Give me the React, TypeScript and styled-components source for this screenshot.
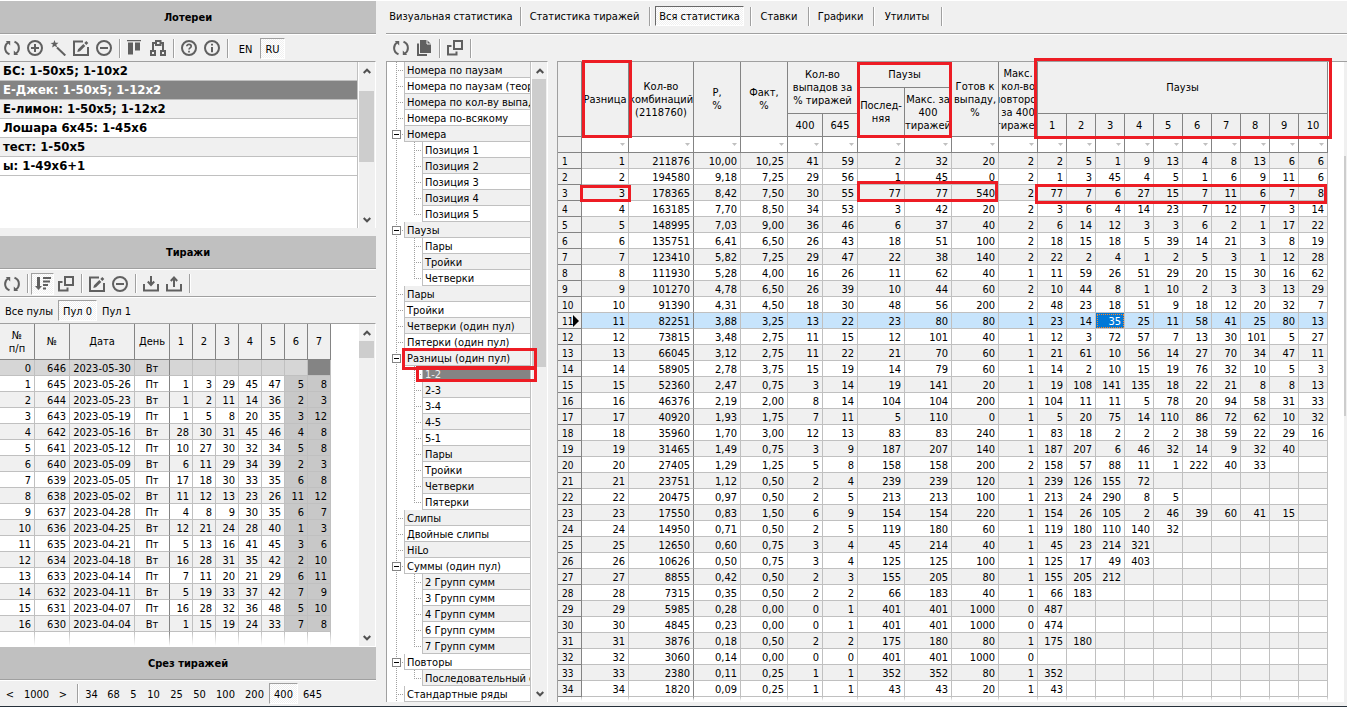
import React from 'react';
import styled, { createGlobalStyle, css } from 'styled-components';

const c = {
  face: '#f0f0f0',
  title: '#c0c0c0',
  line: '#c0c0c0',
  edge: '#a0a0a0',
  dark: '#848484',
  icon: '#606060',
  mark: '#ed1c24',
  thumb: '#cdcdcd',
};

const GlobalStyle = createGlobalStyle`
  * { box-sizing: border-box; }
  body {
    margin: 0;
    background: ${c.face};
    color: #000;
    font: 11px/13px "DejaVu Sans Condensed", "Noto Sans", sans-serif;
  }
  button { font: inherit; color: inherit; margin: 0; padding: 0; border: 0; background: none; }
`;

const pressed = css`
  border: 1px solid;
  border-color: ${c.edge} #fff #fff ${c.edge};
  background: conic-gradient(#fff 25%, ${c.face} 0 50%, #fff 0 75%, ${c.face} 0) 0 0 / 2px 2px;
`;

const Window = styled.div`
  display: flex;
  flex-direction: column;
  min-height: 100vh;
  border-top: 1px solid #fff;
  border-bottom: 1px solid #26303a;
`;
const Columns = styled.div`
  flex: 1;
  display: flex;
  gap: 10px;
`;
const Sidebar = styled.aside`
  flex: 0 0 376px;
  display: flex;
  flex-direction: column;
`;
const Content = styled.main`
  flex: 1;
  min-width: 0;
  display: flex;
  flex-direction: column;
`;
const Title = styled.h2`
  margin: 0;
  height: 34px;
  display: flex;
  align-items: center;
  justify-content: center;
  background: ${c.title};
  border-bottom: 1px solid #fff;
  box-shadow: inset 0 -1px ${c.edge};
  font-size: 11px;
  font-weight: bold;
`;
const Toolbar = styled.div<{ $ruled?: boolean; $indent?: boolean }>`
  display: flex;
  align-items: center;
  height: ${p => (p.$ruled ? 28 : 26)}px;
  padding-left: ${p => (p.$indent ? 3 : 0)}px;
  ${p => p.$ruled && css`
    border-bottom: 1px solid #fff;
    box-shadow: inset 0 -1px ${c.edge};
  `}
`;
const ToolButton = styled.button<{ $on?: boolean }>`
  width: 23px;
  height: 22px;
  padding: 0 3px 0 4px;
  ${p => p.$on && css`${pressed} padding: 0 2px 0 3px;`}
  svg { display: block; width: 16px; height: 16px; }
`;
const Separator = styled.span`
  width: 8px;
  height: 19px;
  padding-left: 4px;
  &::before {
    content: "";
    display: block;
    width: 2px;
    height: 100%;
    background: linear-gradient(to right, ${c.edge} 1px, #fff 1px);
  }
`;
const TextBar = styled.div`
  display: flex;
  align-items: center;
  height: 25px;
`;
const TextButton = styled.button<{ $w: number; $on?: boolean }>`
  width: ${p => p.$w}px;
  height: 21px;
  padding-top: 2px;
  white-space: nowrap;
  text-align: center;
  ${p => p.$on && pressed}
`;

const ListPanel = styled.div`
  flex: 1;
  min-height: 167px;
  display: flex;
  margin-bottom: 8px;
  border-top: 1px solid ${c.edge};
  border-right: 1px solid #fff;
  background: #fff;
`;
const LotteryList = styled.ul`
  flex: 1;
  margin: 0 1px 0 0;
  padding: 0;
  list-style: none;
  border-right: 1px solid ${c.line};
`;
const Lottery = styled.li<{ $selected?: boolean }>`
  height: 19px;
  padding-left: 3px;
  border-bottom: 1px solid ${c.line};
  font-size: 13px;
  line-height: 18px;
  font-weight: bold;
  background: #fff;
  &:nth-child(odd) { background: ${c.face}; }
  ${p => p.$selected && css`&& { background: ${c.dark}; color: #fff; }`}
`;

const Bar = styled.div<{ $w: number }>`
  flex: 0 0 ${p => p.$w}px;
  display: flex;
  flex-direction: column;
  background: ${c.face};
  overflow: hidden;
`;
const BarArrow = styled.button`
  height: 17px;
  width: 16px;
  display: flex;
  align-items: center;
  justify-content: center;
`;
const BarThumb = styled.div<{ $gap: number; $size: number }>`
  height: ${p => p.$size}px;
  margin: ${p => p.$gap}px 1px auto 0;
  background: ${c.thumb};
`;

const Arrow = ({ up }: { up?: boolean }) => (
  <svg width="8" height="6" viewBox="0 0 8 6" fill="none" stroke="#505050" strokeWidth="2">
    <path d={up ? 'M.7 5 4 1.7 7.3 5' : 'M.7 1 4 4.3 7.3 1'} />
  </svg>
);
const ScrollBar = ({ gap, size, w = 16, arrows = true }: { gap: number; size: number; w?: number; arrows?: boolean }) => (
  <Bar $w={w}>
    {arrows && <BarArrow aria-label="Вверх"><Arrow up /></BarArrow>}
    <BarThumb $gap={gap} $size={size} />
    {arrows && <BarArrow aria-label="Вниз"><Arrow /></BarArrow>}
  </Bar>
);

const DrawPanel = styled.div`
  display: flex;
  justify-content: space-between;
  border-top: 1px solid ${c.edge};
  border-right: 1px solid #fff;
  border-bottom: 1px solid #fff;
  background: #fff;
`;
const Table = styled.table`
  table-layout: fixed;
  width: 1px;
  border-collapse: separate;
  border-spacing: 0;
  th { font-weight: normal; }
`;
const HeadCell = styled.th`
  padding: 0;
  background: ${c.face};
  border-right: 1px solid ${c.dark};
  border-bottom: 1px solid ${c.dark};
  white-space: pre;
  overflow: hidden;
  text-align: center;
  vertical-align: middle;
`;
const HeadText = styled.span`
  display: flex;
  justify-content: center;
`;
const Cell = styled.td<{ $align?: string; $strong?: boolean; $bg?: string }>`
  height: 16px;
  padding: 2px 3px 0;
  line-height: 13px;
  text-align: ${p => p.$align || 'right'};
  white-space: nowrap;
  border-right: 1px solid ${p => (p.$strong ? c.dark : c.line)};
  border-bottom: 1px solid ${c.line};
  ${p => p.$bg && css`background: ${p.$bg};`}
`;
const Row = styled.tr<{ $bg: string }>`
  background: ${p => p.$bg};
`;
const FadeCell = styled.td<{ $h: number; $strong?: boolean }>`
  height: ${p => p.$h}px;
  padding: 0;
  background: linear-gradient(to bottom, ${p => (p.$strong ? c.dark : c.line)}, #fff) right / 1px 100% no-repeat;
`;

const TabBar = styled.nav`
  display: flex;
  align-items: center;
  height: 34px;
  padding-bottom: 3px;
  border-bottom: 1px solid #fff;
  box-shadow: inset 0 -1px ${c.edge};
`;
const Tab = styled.button<{ $w: number; $on?: boolean }>`
  width: ${p => p.$w}px;
  height: 20px;
  white-space: nowrap;
  ${p => p.$on && css`${pressed} margin: 0 2px; border-color: #696969 #fff #fff #696969;`}
`;
const Panels = styled.div`
  flex: 1;
  display: flex;
  gap: 9px;
  margin-bottom: 4px;
`;

const TreePanel = styled.div`
  position: relative;
  flex: 0 0 162px;
  min-width: 0;
  display: flex;
  border: 1px solid #fff;
  border-top-color: ${c.edge};
  border-left-color: ${c.edge};
  border-bottom: 0;
  background: #fff;
`;
const Tree = styled.ul`
  flex: 1;
  min-width: 0;
  margin: 0 1px 0 0;
  padding: 0;
  list-style: none;
`;
const TreeRow = styled.li`
  display: flex;
  height: 16px;
`;
const dotsV = `repeating-linear-gradient(to bottom, ${c.edge} 0 1px, transparent 1px 2px)`;
const dotsH = `repeating-linear-gradient(to right, ${c.edge} 0 1px, transparent 1px 2px)`;
const Trunk = styled.span<{ $branch: boolean }>`
  flex: 0 0 17px;
  display: flex;
  align-items: center;
  padding-left: 5px;
  background: ${dotsV} 9px 0 / 1px 100% no-repeat${p => (p.$branch ? `, ${dotsH} 9px 8px / 8px 1px no-repeat` : '')};
`;
const Twig = styled.span<{ $last: boolean }>`
  flex: 0 0 18px;
  background: ${dotsV} 10px 0 / 1px ${p => (p.$last ? '8px' : '100%')} no-repeat, ${dotsH} 10px 8px / 7px 1px no-repeat;
`;
const Toggle = styled.button`
  width: 9px;
  height: 9px;
  && {
    border: 1px solid ${c.dark};
    background: linear-gradient(#000, #000) center / 5px 1px no-repeat #fff;
  }
`;
const TreeLabel = styled.span<{ $alt: boolean; $selected?: boolean }>`
  flex: 1;
  min-width: 0;
  overflow: hidden;
  white-space: nowrap;
  padding: 2px 0 0 2px;
  border: 1px solid ${c.line};
  border-top: 0;
  background: ${p => (p.$alt ? c.face : '#fff')};
  ${p => p.$selected && css`background: ${c.dark}; color: #f0f0f0;`}
`;

const GridPanel = styled.div`
  position: relative;
  flex: 1;
  min-width: 0;
  display: flex;
  border-top: 1px solid ${c.edge};
  border-left: 1px solid ${c.edge};
  background: #fff;
`;
const GridView = styled.div`
  flex: 1;
  min-width: 0;
  overflow: hidden;
`;
const IndexCell = styled.th`
  position: relative;
  height: 16px;
  padding: 1px 0 0 4px;
  text-align: left;
  font-size: 10px;
  line-height: 13px;
  background: ${c.face};
  border-right: 1px solid ${c.dark};
  border-bottom: 1px solid ${c.dark};
  svg { position: absolute; right: 2px; top: 2px; }
`;
const FilterCell = styled.td`
  height: 16px;
  padding: 0 3px 0 0;
  border-right: 1px solid ${c.dark};
  border-bottom: 1px solid ${c.dark};
`;
const FilterButton = styled.button`
  display: block;
  width: 5px;
  height: 15px;
  && { margin-left: auto; }
  svg { display: block; }
`;
const CurrentCell = styled(Cell)`
  background: #0078d7;
  color: #fff;
  outline: 1px dotted #ff8728;
  outline-offset: -2px;
`;
const Mark = styled.div<{ $x: number; $y: number; $w: number; $h: number }>`
  position: absolute;
  left: ${p => p.$x}px;
  top: ${p => p.$y}px;
  width: ${p => p.$w}px;
  height: ${p => p.$h}px;
  border: 3px solid ${c.mark};
  pointer-events: none;
`;

const iconPaths: Record<string, React.ReactNode> = {
  refresh: (
    <>
      <path d="M5.500 14.200C2.900 13.200 1.100 10.800 1.100 8c0-2.300 1-4.200 2.900-5.500M10.500 1.800c2.600 1 4.400 3.400 4.400 6.200 0 2.300-1 4.200-2.900 5.500" />
      <path d="M1.800 1h4.400v4.400zM14.200 15H9.800v-4.400z" fill="currentColor" stroke="none" />
    </>
  ),
  add: <><circle cx="8" cy="8" r="7" /><path d="M8 4v8M4 8h8" /></>,
  remove: <><circle cx="8" cy="8" r="7" /><path d="M4 8h8" /></>,
  wand: (
    <>
      <path d="M7 7.500 15.300 15.500" />
      <path d="m4.500 0 1 2.800 3-.1-2.300 2 1.100 2.900-2.600-1.500L2.100 7.500 2.900 4.600.5 2.900l2.900-.1z" fill="currentColor" stroke="none" />
    </>
  ),
  edit: (
    <>
      <path d="M10 1.500H1V15h14V7" />
      <path d="m5 9.200 5.300-5.300 2 2L7 11.200l-2.700.7zM11.300 2.900 13.300.9l2 2-2 2z" fill="currentColor" stroke="none" />
    </>
  ),
  columns: (
    <path d="M0 0h14v1.200H0zM1 2.500h5v12H1zM8 2.500h5v8H8z" fill="currentColor" stroke="none" />
  ),
  nodes: (
    <path d="M6 1h4.500v4H6zM1 11h4v4H1zM11 11h4v4h-4zM6 3H3v8M10.500 3H13v8" />
  ),
  help: (
    <>
      <circle cx="8" cy="8" r="7" />
      <path d="M5.800 6.300C5.800 3.700 10.200 3.700 10.200 6.300 10.200 7.900 8 7.900 8 9.600M8 10.700v1.700" strokeWidth="1.700" />
    </>
  ),
  info: <><circle cx="8" cy="8" r="7" /><path d="M8 3.800v1.800M8 7v5.300" /></>,
  sort: (
    <path d="M2 1h3v9h2l-3.500 4L0 10h2zM8 1h8v2H8zM8 4.500h7v2H8zM8 8h5v2H8zM8 11.500h3v2H8z" fill="currentColor" stroke="none" />
  ),
  windows: <path d="M7 1h8v8H7zM4.500 6H1v8.500h8.500V11.500" />,
  import: <path d="M1 8v6.500h14V8M8 0v8M4.800 5.500 8 9l3.200-3.500" />,
  export: <path d="M1 8v6.500h14V8M8 11V2M4.800 5 8 1.500 11.200 5" />,
  copy: (
    <>
      <path d="M2 3.500V15h9" />
      <path d="M4 0h7l4 4v9H4z" fill="currentColor" stroke="none" />
      <path d="M11 0v4h4" stroke="#f0f0f0" strokeWidth="1" />
    </>
  ),
};
const Icon = ({ name }: { name: string }) => (
  <svg viewBox="0 0 16 16" fill="none" stroke="currentColor" strokeWidth="2" color={c.icon} aria-hidden="true">
    {iconPaths[name]}
  </svg>
);
const Tools = ({ items, on }: { items: [string, string][]; on?: string }) => (
  <>
    {items.map(([name, label], i) =>
      name === '|' ? <Separator key={i} /> : (
        <ToolButton key={i} aria-label={label} title={label} $on={on === name}><Icon name={name} /></ToolButton>
      ),
    )}
  </>
);

const lotteries = ['БС: 1-50x5; 1-10x2', 'Е-Джек: 1-50x5; 1-12x2', 'Е-лимон: 1-50x5; 1-12x2', 'Лошара 6x45: 1-45x6', 'тест: 1-50x5', 'ы: 1-49x6+1'];

const drawCols = [35, 35, 65, 35, 23, 23, 23, 23, 23, 23, 23];
const drawHeads = ['№\nп/п', '№', 'Дата', 'День', '1', '2', '3', '4', '5', '6', '7'];
const draws = `0 646 2023-05-30 Вт
1 645 2023-05-26 Пт 1 3 29 45 47 5 8
2 644 2023-05-23 Вт 1 2 11 14 36 2 3
3 643 2023-05-19 Пт 1 5 8 20 35 3 12
4 642 2023-05-16 Вт 28 30 31 45 46 4 8
5 641 2023-05-12 Пт 10 27 30 32 34 5 8
6 640 2023-05-09 Вт 6 11 29 34 39 2 3
7 639 2023-05-05 Пт 17 18 30 33 35 6 8
8 638 2023-05-02 Вт 11 12 13 23 26 11 12
9 637 2023-04-28 Пт 4 8 9 30 35 6 7
10 636 2023-04-25 Вт 12 21 24 28 40 1 3
11 635 2023-04-21 Пт 5 13 16 41 45 3 6
12 634 2023-04-18 Вт 16 28 31 35 42 2 10
13 633 2023-04-14 Пт 7 11 20 21 29 6 11
14 632 2023-04-11 Вт 5 19 33 37 42 7 9
15 631 2023-04-07 Пт 16 28 32 36 48 5 10
16 630 2023-04-04 Вт 1 15 19 24 33 7 8`.split('\n').map(r => r.split(' '));

type Node = { text: string; children?: string[] };
const tree: Node[] = [
  { text: 'Номера по паузам' },
  { text: 'Номера по паузам (теория)' },
  { text: 'Номера по кол-ву выпадов' },
  { text: 'Номера по-всякому' },
  { text: 'Номера', children: ['Позиция 1', 'Позиция 2', 'Позиция 3', 'Позиция 4', 'Позиция 5'] },
  { text: 'Паузы', children: ['Пары', 'Тройки', 'Четверки'] },
  { text: 'Пары' },
  { text: 'Тройки' },
  { text: 'Четверки (один пул)' },
  { text: 'Пятерки (один пул)' },
  { text: 'Разницы (один пул)', children: ['1-2', '2-3', '3-4', '4-5', '5-1', 'Пары', 'Тройки', 'Четверки', 'Пятерки'] },
  { text: 'Слипы' },
  { text: 'Двойные слипы' },
  { text: 'HiLo' },
  { text: 'Суммы (один пул)', children: ['2 Групп сумм', '3 Групп сумм', '4 Групп сумм', '6 Групп сумм', '7 Групп сумм'] },
  { text: 'Повторы', children: ['Последовательный с'] },
  { text: 'Стандартные ряды' },
];
const treeRows = tree.flatMap(n => [
  { text: n.text, depth: 0, open: !!n.children, last: false },
  ...(n.children || []).map((text, i, all) => ({ text, depth: 1, open: false, last: i === all.length - 1 })),
]);

const statCols = [24, 47, 65, 47, 47, 35, 35, 47, 47, 47, 39, 29, 29, 29, 29, 29, 29, 29, 29, 29, 29];
const stats = `211876 10,00 10,25 41 59 2 32 20 2 2 5 1 9 13 4 8 13 6 6
194580 9,18 7,25 29 56 1 45 0 2 1 3 45 4 5 1 6 9 11 6
178365 8,42 7,50 30 55 77 77 540 2 77 7 6 27 15 7 11 6 7 8
163185 7,70 8,50 34 53 3 42 20 2 3 6 4 14 23 7 12 7 3 14
148995 7,03 9,00 36 46 6 37 40 2 6 14 12 3 3 6 2 1 17 22
135751 6,41 6,50 26 43 18 51 100 2 18 15 18 5 39 14 21 3 8 19
123410 5,82 7,25 29 47 22 38 140 2 22 2 4 1 2 5 3 1 12 28
111930 5,28 4,00 16 26 11 62 40 1 11 59 26 51 29 20 15 30 16 62
101270 4,78 6,50 26 39 10 44 60 2 10 44 8 1 10 2 3 3 13 29
91390 4,31 4,50 18 30 48 56 200 2 48 23 18 51 9 18 12 20 32 7
82251 3,88 3,25 13 22 23 80 80 1 23 14 35 25 11 58 41 25 80 13
73815 3,48 2,75 11 15 12 101 40 1 12 3 72 57 7 13 30 101 5 27
66045 3,12 2,75 11 22 21 70 60 1 21 61 10 56 14 27 70 34 47 11
58905 2,78 3,75 15 19 14 79 60 1 14 2 10 15 19 76 32 10 5 3
52360 2,47 0,75 3 14 19 141 20 1 19 108 141 135 18 22 21 8 8 13
46376 2,19 2,00 8 14 104 104 200 1 104 11 11 5 78 20 94 58 31 33
40920 1,93 1,75 7 11 5 110 0 1 5 20 75 14 110 86 72 62 10 32
35960 1,70 3,00 12 13 83 83 240 1 83 18 2 2 2 38 59 22 29 16
31465 1,49 0,75 3 9 187 207 140 1 187 207 6 46 32 14 9 32 40
27405 1,29 1,25 5 8 158 158 200 2 158 57 88 11 1 222 40 33
23751 1,12 0,50 2 4 239 239 120 1 239 126 155 72
20475 0,97 0,50 2 5 213 213 100 1 213 24 290 8 5
17550 0,83 1,50 6 9 154 154 220 1 154 26 105 2 46 39 60 41 15
14950 0,71 0,50 2 5 119 180 60 1 119 180 110 140 32
12650 0,60 0,75 3 4 45 214 40 1 45 23 214 321
10626 0,50 0,75 3 4 125 125 100 1 125 17 49 403
8855 0,42 0,50 2 3 155 205 80 1 155 205 212
7315 0,35 0,50 2 2 66 183 40 1 66 183
5985 0,28 0,00 0 1 401 401 1000 0 487
4845 0,23 0,00 0 1 401 401 1000 0 474
3876 0,18 0,50 2 2 175 180 80 1 175 180
3060 0,14 0,00 0 0 401 401 1000 0
2380 0,11 0,25 1 1 352 352 80 1 352
1820 0,09 0,25 1 1 43 43 20 1 43`.split('\n').map((r, i) => [String(i + 1), ...r.split(' ')]);

const Head = ({ text, cols, rows }: { text: string; cols?: number; rows?: number }) => (
  <HeadCell colSpan={cols} rowSpan={rows}><HeadText>{text}</HeadText></HeadCell>
);

const HeadRow = styled.tr<{ $h: number }>`
  height: ${p => p.$h}px;
`;
const Columned = ({ widths }: { widths: number[] }) => (
  <colgroup>{widths.map((w, i) => <col key={i} width={w} />)}</colgroup>
);

const DrawTable = () => (
  <Table>
    <Columned widths={drawCols} />
    <thead>
      <HeadRow $h={36}>{drawHeads.map((h, i) => <Head key={i} text={h} />)}</HeadRow>
    </thead>
    <tbody>
      {draws.map((d, r) => (
        <Row key={r} $bg={r === 0 ? '#d6d6d6' : r % 2 ? '#fff' : c.face}>
          {drawCols.map((_, i) => (
            <Cell
              key={i}
              $align={i === 2 || i === 3 ? 'center' : 'right'}
              $strong={i === 3}
              $bg={r === 0 ? (i === 10 ? c.dark : undefined) : i > 8 ? '#c8c8c8' : undefined}
            >
              {d[i]}
            </Cell>
          ))}
        </Row>
      ))}
      <tr>{drawCols.map((_, i) => <FadeCell key={i} $h={14} $strong={i === 3} />)}</tr>
    </tbody>
  </Table>
);

const StatTable = () => (
  <Table>
    <Columned widths={statCols} />
    <thead>
      <HeadRow $h={26}>
        <Head text="" rows={3} />
        <Head text="Разница" rows={3} />
        <Head text={'Кол-во\nкомбинаций\n(2118760)'} rows={3} />
        <Head text={'P,\n%'} rows={3} />
        <Head text={'Факт,\n%'} rows={3} />
        <Head text={'Кол-во\nвыпадов за\n% тиражей'} cols={2} rows={2} />
        <Head text="Паузы" cols={2} />
        <Head text={'Готов к\nвыпаду,\n%'} rows={3} />
        <Head text={'Макс.\nкол-во\nповторов\nза 400\nтиражей'} rows={3} />
        <Head text="Паузы" cols={10} rows={2} />
      </HeadRow>
      <HeadRow $h={26}>
        <Head text={'Послед-\nняя'} rows={2} />
        <Head text={'Макс. за\n400\nтиражей'} rows={2} />
      </HeadRow>
      <HeadRow $h={23}>
        <Head text="400" />
        <Head text="645" />
        {Array.from({ length: 10 }, (_, i) => <Head key={i} text={String(i + 1)} />)}
      </HeadRow>
    </thead>
    <tbody>
      <tr>
        <IndexCell />
        {statCols.slice(1).map((_, i) => (
          <FilterCell key={i}>
            <FilterButton aria-label="Фильтр">
              <svg width="5" height="15" viewBox="0 0 5 15"><path d="M0 6h5L2.500 9z" fill={c.line} /></svg>
            </FilterButton>
          </FilterCell>
        ))}
      </tr>
      {stats.map((s, r) => (
        <Row key={r} $bg={r === 10 ? '#c7e4fc' : r % 2 ? '#fff' : c.face}>
          <IndexCell scope="row">
            {r + 1}
            {r === 10 && <svg width="6" height="12" viewBox="0 0 6 12"><path d="M0 0v12l6-6z" /></svg>}
          </IndexCell>
          {statCols.slice(1).map((_, i) =>
            r === 10 && i === 12
              ? <CurrentCell key={i}>{s[i]}</CurrentCell>
              : <Cell key={i} $strong={i === 1}>{s[i]}</Cell>,
          )}
        </Row>
      ))}
      <tr>{statCols.map((_, i) => <FadeCell key={i} $h={4} $strong={i === 2} />)}</tr>
    </tbody>
  </Table>
);

const slices: [string, number][] = [['34', 21], ['68', 23], ['5', 17], ['10', 23], ['25', 23], ['50', 23], ['100', 29], ['200', 29], ['400', 29], ['645', 29]];
const tabs: [string, number][] = [
  ['Визуальная статистика', 130], ['Статистика тиражей', 121], ['Вся статистика', 89],
  ['Ставки', 50], ['Графики', 57], ['Утилиты', 60],
];

export default function App() {
  return (
    <Window>
      <GlobalStyle />
      <Columns>
        <Sidebar>
          <Title>Лотереи</Title>
          <Toolbar>
            <Tools items={[
              ['refresh', 'Обновить'], ['add', 'Добавить'], ['wand', 'Мастер'], ['edit', 'Изменить'], ['remove', 'Удалить'], ['|', ''],
              ['columns', 'Колонки'], ['nodes', 'Связи'], ['|', ''], ['help', 'Справка'], ['info', 'О программе'], ['|', ''],
            ]} />
            <TextButton $w={29}>EN</TextButton>
            <TextButton $w={25} $on>RU</TextButton>
          </Toolbar>
          <ListPanel>
            <LotteryList>
              {lotteries.map((l, i) => <Lottery key={l} $selected={i === 1}>{l}</Lottery>)}
            </LotteryList>
            <ScrollBar gap={12} size={71} />
          </ListPanel>

          <Title>Тиражи</Title>
          <Toolbar $ruled>
            <Tools on="sort" items={[
              ['refresh', 'Обновить'], ['|', ''], ['sort', 'Сортировка'], ['windows', 'В окне'], ['|', ''],
              ['edit', 'Изменить'], ['remove', 'Удалить'], ['|', ''], ['import', 'Импорт'], ['export', 'Экспорт'], ['|', ''],
            ]} />
          </Toolbar>
          <TextBar>
            <TextButton $w={58}>Все пулы</TextButton>
            <TextButton $w={39} $on>Пул 0</TextButton>
            <TextButton $w={39}>Пул 1</TextButton>
          </TextBar>
          <DrawPanel>
            <DrawTable />
            <ScrollBar gap={0} size={17} />
          </DrawPanel>

          <Title>Срез тиражей</Title>
          <TextBar>
            <TextButton $w={20}>&lt;</TextButton>
            <TextButton $w={33}>1000</TextButton>
            <TextButton $w={20}>&gt;</TextButton>
            <Separator />
            {slices.map(([t, w]) => <TextButton key={t} $w={w} $on={t === '400'}>{t}</TextButton>)}
          </TextBar>
        </Sidebar>

        <Content>
          <TabBar>
            {tabs.map(([t, w], i) => (
              <React.Fragment key={t}>
                <Tab $w={w} $on={i === 2}>{t}</Tab>
                <Separator />
              </React.Fragment>
            ))}
          </TabBar>
          <Toolbar $indent>
            <Tools items={[['refresh', 'Обновить'], ['copy', 'Копировать'], ['|', ''], ['windows', 'В окне'], ['|', '']]} />
          </Toolbar>
          <Panels>
            <TreePanel>
              <Tree>
                {treeRows.map((n, i) => (
                  <TreeRow key={i}>
                    <Trunk $branch={n.depth === 0}>{n.open && <Toggle aria-label="Свернуть" />}</Trunk>
                    {n.depth === 1 && <Twig $last={n.last} />}
                    <TreeLabel $alt={i % 2 === 0} $selected={n.text === '1-2'}>{n.text}</TreeLabel>
                  </TreeRow>
                ))}
              </Tree>
              <ScrollBar gap={0} size={288} w={15} />
              <Mark $x={15} $y={286} $w={135} $h={22} />
              <Mark $x={29} $y={304} $w={121} $h={16} />
            </TreePanel>
            <GridPanel>
              <GridView><StatTable /></GridView>
              <ScrollBar gap={94} size={260} w={3} arrows={false} />
              <Mark $x={24} $y={-2} $w={50} $h={78} />
              <Mark $x={22} $y={123} $w={51} $h={17} />
              <Mark $x={299} $y={0} $w={95} $h={76} />
              <Mark $x={299} $y={119} $w={141} $h={21} />
              <Mark $x={476} $y={-4} $w={298} $h={81} />
              <Mark $x={477} $y={122} $w={292} $h={20} />
            </GridPanel>
          </Panels>
        </Content>
      </Columns>
    </Window>
  );
}
